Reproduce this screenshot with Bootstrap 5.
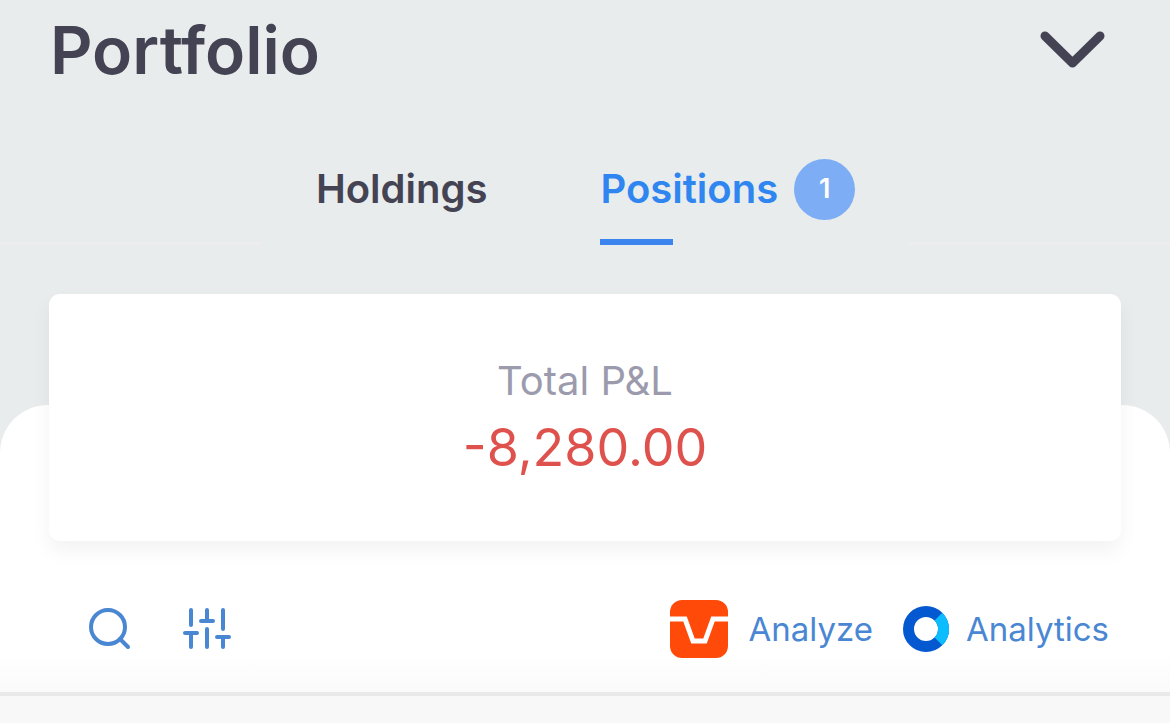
<!DOCTYPE html>
<html lang="en">
<head>
<meta charset="utf-8">
<meta name="viewport" content="width=device-width, initial-scale=1">
<title>Portfolio</title>
<link href="https://cdn.jsdelivr.net/npm/bootstrap@5.3.0/dist/css/bootstrap.min.css" rel="stylesheet">
<style>
  body { background: #e8ecec; color: #444354; font-family: Inter, "Liberation Sans", sans-serif; }
  .page-title { font-size: 66px; line-height: 80px; font-weight: 600; }
  .page-head { padding: 10px 64px 0 50px; }
  .tab-row { padding-top: 55px; }
  .tab-rule { height: 3px; background: #ededef; }
  .tabs { padding: 0 25px 0 26px; gap: 57px; }
  .tabs .nav-link { font-size: 40px; line-height: 64px; font-weight: 600; color: #444354; padding: 12px 28px 24px; }
  .tabs .nav-link.active { color: #2f86f0; position: relative; }
  .tabs .nav-link.active::after { content: ""; position: absolute; left: 28px; bottom: 0; width: 73px; height: 6px; background: #3c85ee; }
  .count { width: 61px; height: 61px; margin-left: 16px; font-size: 27px; font-weight: 600; background: #7dadf5; color: #fff; }
  .sheet { margin-top: 160px; border-radius: 48px 48px 0 0; padding: 0 49px; background: linear-gradient(#fff 250px, #fafafa); }
  .summary { margin-top: -111px; padding: 65px 16px 63px; border-radius: 11px; box-shadow: 0 10px 20px rgba(0,0,0,.05); }
  .summary-label { font-size: 40px; line-height: 44px; color: #9b9bad; }
  .summary-value { font-size: 52px; line-height: 60px; color: #df514c; margin-top: 15px; }
  .tools { padding: 59px 12px 34px 40px; }
  .tools a, .tools button { color: #4a87d3; }
  .tools a { font-size: 33px; line-height: 58px; }
  .analyze { gap: 20px; margin-right: 29px; }
  .rows { border-top: 4px solid #e9e9e9; background: #f8f8f8; min-height: 27px; flex: 1 0 auto; }
</style>
</head>
<body class="d-flex flex-column min-vh-100">
<header>
  <div class="page-head d-flex align-items-center justify-content-between">
    <h1 class="page-title m-0">Portfolio</h1>
    <button type="button" class="btn p-0 border-0 lh-1" aria-label="Choose account">
      <svg width="68" height="42" viewBox="0 0 68 42" fill="none" stroke="#444354" stroke-width="9" stroke-linecap="round" stroke-linejoin="round"><path d="M7 7 34.500 34 62 7"/></svg>
    </button>
  </div>
  <div class="tab-row d-flex align-items-end">
    <div class="tab-rule flex-fill"></div>
    <nav class="tabs nav flex-nowrap" aria-label="Portfolio sections">
      <a class="nav-link" href="#holdings">Holdings</a>
      <a class="nav-link active d-flex align-items-center" href="#positions" aria-current="page">Positions<span class="count rounded-circle d-flex align-items-center justify-content-center">1</span></a>
    </nav>
    <div class="tab-rule flex-fill"></div>
  </div>
</header>
<main class="sheet">
  <section class="summary bg-white text-center">
    <div class="summary-label">Total P&amp;L</div>
    <div class="summary-value">-8,280.00</div>
  </section>
  <div class="tools d-flex align-items-center justify-content-between">
    <div class="d-flex align-items-center gap-5">
      <button type="button" class="btn p-0 border-0 lh-1" aria-label="Search">
        <svg width="44" height="44" viewBox="0 0 44 44" fill="none" stroke="currentColor" stroke-width="4" stroke-linecap="round"><circle cx="19" cy="20" r="17"/><path d="M31 32 39 40"/></svg>
      </button>
      <button type="button" class="btn p-0 border-0 lh-1" aria-label="Filter">
        <svg width="52" height="44" viewBox="0 0 52 44" fill="none" stroke="currentColor" stroke-width="4" stroke-linecap="round"><path d="M10 3V18M4 26H16M10 26V40M26 3V14M20 14H32M26 22V40M42 3V22M36 30H48M42 30V40"/></svg>
      </button>
    </div>
    <div class="d-flex align-items-center">
      <a href="#analyze" class="analyze d-flex align-items-center text-decoration-none">
        <svg width="58" height="58" viewBox="0 0 58 58"><rect width="58" height="58" rx="12" fill="#ff4a0a"/><path d="M0 19H15L23 41H35L43 19H58" fill="none" stroke="#fff" stroke-width="5"/></svg>Analyze</a>
      <a href="#analytics" class="d-flex align-items-center text-decoration-none gap-3">
        <svg width="48" height="48" viewBox="0 0 48 48" fill="none" stroke-width="11"><circle cx="24" cy="24" r="17.500" stroke="#0458d0"/><path d="M36.400 11.600A17.500 17.500 0 0 1 36.400 36.400" stroke="#0bbcff"/></svg>Analytics</a>
    </div>
  </div>
</main>
<div class="rows"></div>
<script src="https://cdn.jsdelivr.net/npm/bootstrap@5.3.0/dist/js/bootstrap.bundle.min.js"></script>
</body>
</html>
